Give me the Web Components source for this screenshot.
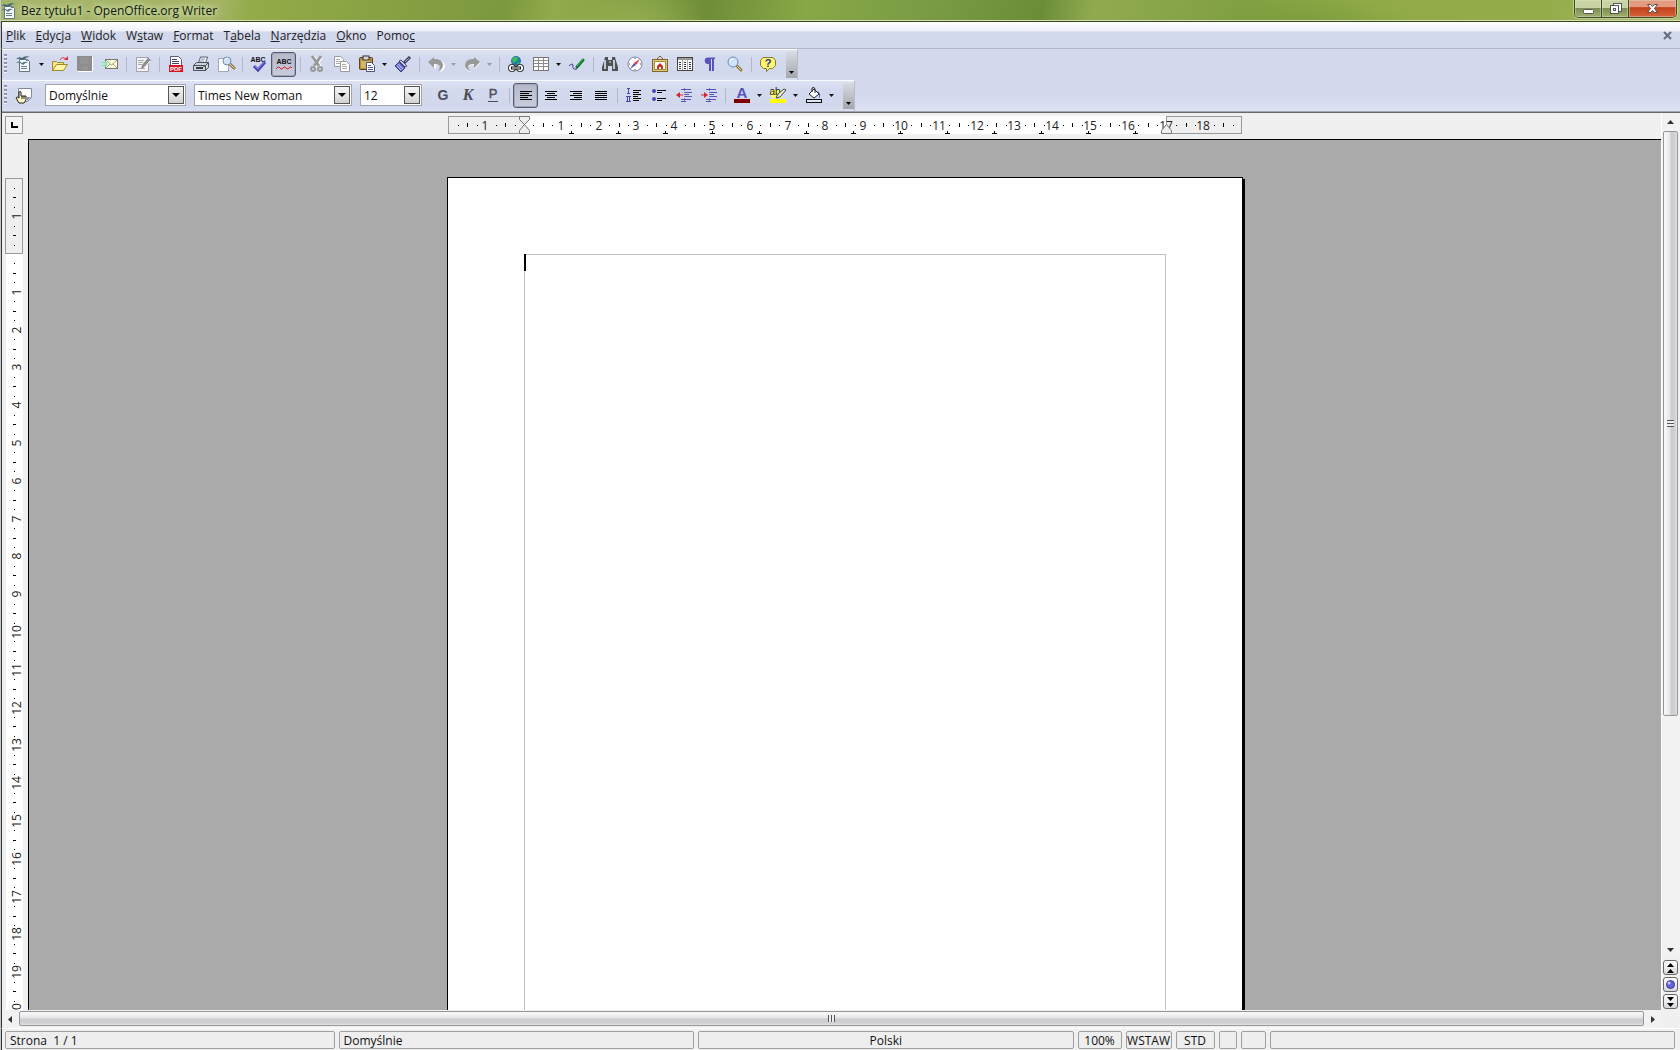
<!DOCTYPE html>
<html lang="pl">
<head>
<meta charset="utf-8">
<title>Bez tytułu1 - OpenOffice.org Writer</title>
<style>
    html, body {
        margin: 0;
        height: 100%;
        overflow: hidden;
    }

    body {
        font-family: "Open Sans", "Noto Sans", sans-serif;
        font-size: 11px;
        color: #111;
    }
</style>
</head>
<body>

<writer-window>
    <title-bar slot="title">Bez tytułu1 - OpenOffice.org Writer</title-bar>

    <menu-bar slot="menu">
        <menu-entry><u>P</u>lik</menu-entry>
        <menu-entry><u>E</u>dycja</menu-entry>
        <menu-entry><u>W</u>idok</menu-entry>
        <menu-entry>W<u>s</u>taw</menu-entry>
        <menu-entry><u>F</u>ormat</menu-entry>
        <menu-entry>T<u>a</u>bela</menu-entry>
        <menu-entry><u>N</u>arzędzia</menu-entry>
        <menu-entry><u>O</u>kno</menu-entry>
        <menu-entry>Pomo<u>c</u></menu-entry>
    </menu-bar>

    <tool-bar slot="tools" label="Standardowy">
        <tool-button icon="new" label="Nowy" drop></tool-button>
        <tool-button icon="open" label="Otwórz"></tool-button>
        <tool-button icon="save" label="Zapisz"></tool-button>
        <tool-button icon="mail" label="Wyślij"></tool-button>
        <tool-separator></tool-separator>
        <tool-button icon="edit" label="Edytuj plik"></tool-button>
        <tool-separator></tool-separator>
        <tool-button icon="pdf" label="Eksportuj jako PDF"></tool-button>
        <tool-button icon="print" label="Drukuj"></tool-button>
        <tool-button icon="preview" label="Podgląd strony"></tool-button>
        <tool-separator></tool-separator>
        <tool-button icon="spell" label="Sprawdzanie pisowni"></tool-button>
        <tool-button icon="autospell" label="Autosprawdzanie pisowni" pressed></tool-button>
        <tool-separator></tool-separator>
        <tool-button icon="cut" label="Wytnij"></tool-button>
        <tool-button icon="copy" label="Kopiuj"></tool-button>
        <tool-button icon="paste" label="Wklej" drop></tool-button>
        <tool-button icon="brush" label="Malarz formatów"></tool-button>
        <tool-separator></tool-separator>
        <tool-button icon="undo" label="Cofnij" drop="off"></tool-button>
        <tool-button icon="redo" label="Ponów" drop="off"></tool-button>
        <tool-separator></tool-separator>
        <tool-button icon="link" label="Hiperłącze"></tool-button>
        <tool-button icon="table" label="Tabela" drop></tool-button>
        <tool-button icon="draw" label="Rysowanie"></tool-button>
        <tool-separator></tool-separator>
        <tool-button icon="find" label="Znajdź"></tool-button>
        <tool-button icon="compass" label="Nawigator"></tool-button>
        <tool-button icon="gallery" label="Galeria"></tool-button>
        <tool-button icon="sources" label="Źródła danych"></tool-button>
        <tool-button icon="pilcrow" label="Znaki niedrukowane"></tool-button>
        <tool-button icon="zoom" label="Powiększenie"></tool-button>
        <tool-separator></tool-separator>
        <tool-button icon="help" label="Pomoc"></tool-button>
    </tool-bar>

    <tool-bar slot="tools" label="Formatowanie">
        <tool-button icon="styles" label="Style i formatowanie"></tool-button>
        <combo-box class="style" label="Styl" value="Domyślnie"></combo-box>
        <combo-box class="font" label="Nazwa czcionki" value="Times New Roman"></combo-box>
        <combo-box class="size" label="Rozmiar" value="12"></combo-box>
        <tool-button icon="bold" label="Pogrubienie"></tool-button>
        <tool-button icon="italic" label="Kursywa"></tool-button>
        <tool-button icon="underline" label="Podkreślenie"></tool-button>
        <tool-separator></tool-separator>
        <tool-button icon="left" label="Do lewej" pressed></tool-button>
        <tool-button icon="center" label="Wyśrodkowanie"></tool-button>
        <tool-button icon="right" label="Do prawej"></tool-button>
        <tool-button icon="justify" label="Wyjustowanie"></tool-button>
        <tool-separator></tool-separator>
        <tool-button icon="numbers" label="Numerowanie"></tool-button>
        <tool-button icon="bullets" label="Wypunktowanie"></tool-button>
        <tool-button icon="outdent" label="Zmniejsz wcięcie"></tool-button>
        <tool-button icon="indent" label="Zwiększ wcięcie"></tool-button>
        <tool-separator></tool-separator>
        <tool-button icon="color" label="Kolor czcionki" drop></tool-button>
        <tool-button icon="highlight" label="Podświetlenie" drop></tool-button>
        <tool-button icon="fill" label="Kolor tła" drop></tool-button>
    </tool-bar>

    <doc-area slot="document"></doc-area>

    <status-bar slot="status">
        <span>Strona &nbsp;1 / 1</span>
        <span>Domyślnie</span>
        <span class="mid">Polski</span>
        <span class="mid">100%</span>
        <span class="mid">WSTAW</span>
        <span class="mid">STD</span>
        <span></span>
        <span></span>
        <span></span>
    </status-bar>
</writer-window>

<script>
// 16x16 drawings for the toolbars
const page = (x, y, w, h, stroke = '#777') =>
    `<path d="M${x} ${y}h${w - 3}l3 3v${h - 3}h-${w}z" fill="#fff" stroke="${stroke}"/>`;

const lines = (rows) => rows
    .map(([x, y, w, c]) => `<rect x="${x}" y="${y}" width="${w}" height="1" fill="${c || '#000'}"/>`)
    .join('');

const lens = (x, y, r) =>
    `<path d="M${x + r - 1} ${y + r - 1}l4 4" stroke="#8d7240" stroke-width="3" stroke-linecap="round"/>
     <path d="M${x + r - 1} ${y + r - 1}l4 4" stroke="#f2d49a" stroke-linecap="round"/>
     <circle cx="${x}" cy="${y}" r="${r}" fill="#cfe3fb" stroke="#7389b0"/>
     <path d="M${x - r + 2} ${y - 1}q1 -2 3 -2" stroke="#fff" fill="none"/>`;

const icons = {
    new: `<path d="M3.500 3.500h8l2 2v10h-10z" fill="#f4f8fa" stroke="#68777f"/>
        <path d="M0 3q3 -3 6 -1q3 -3 8 -1q-4 0 -5 2l-4 1q-2 -2 -5 -1z" fill="#466776"/>
        <path d="M0 7q3 -3 6 0q2 -2 6 -1q-3 1 -5 3q-3 -3 -7 -2z" fill="#58798a"/>
        ${lines([[5, 10, 6, '#64818e'], [5, 12, 6, '#64818e'], [10, 4, 2, '#64818e']])}`,
    open: `<path d="M0.500 14.500v-9h4l1 1h6v3" fill="#f5e68c" stroke="#a08a26"/>
        <path d="M0.500 14.500l4 -6h11l-4 6z" fill="#fff6a8" stroke="#a08a26"/>
        <path d="M8 4q2 -4 6 -1" fill="none" stroke="#d8323c"/><path d="M12 4h4v-4z" fill="#d8323c"/>`,
    save: `<rect x="1" y="1" width="15" height="15" fill="#fff"/><path d="M0 0h15v15h-14l-1 -1z" fill="#8d8d8d"/>
        <path d="M3 1h9v7h-9zM4 10h7v4h-7z" fill="#949494"/>`,
    mail: `<rect x="3.500" y="3.500" width="12" height="9" fill="#fffde0" stroke="#777a66"/>
        <path d="M4 4l5.500 5l5.500 -5M4 12l4 -4M15 12l-4 -4" fill="none" stroke="#999a80"/>
        <path d="M0 6h3v-2l3 4l-3 4v-2h-3z" fill="#6fe09a" opacity=".8"/><path d="M0 8h4" stroke="#e8fff0"/>`,
    edit: `<path d="M1.500 1.500h12v14h-12z" fill="#f3f3f6" stroke="#a2a2a8"/>
        ${lines([[3, 4, 6, '#aaa'], [3, 6, 5, '#aaa'], [3, 8, 4, '#aaa'], [3, 12, 7, '#aaa']])}
        <path d="M6 13l1 -4l6 -7l3 2l-6 7z" fill="#8c8c8c"/><path d="M15 5l-6 7" stroke="#fff"/>`,
    pdf: `${page(2.5, 0.5, 11, 14, '#5a5d78')}
        ${lines([[4, 3, 5, '#42446a'], [4, 5, 7, '#42446a'], [4, 7, 7, '#42446a']])}
        <rect x="1" y="9" width="14" height="7" fill="#d81424"/>
        <text x="8" y="15" font-size="6" font-weight="700" fill="#fff" text-anchor="middle">PDF</text>`,
    print: `<path d="M5.500 7l2 -6h7l-2 6z" fill="#fff" stroke="#555e77"/><path d="M8 3h4M7 5h4" stroke="#7b91ba"/>
        <path d="M0.500 9.500l3 -3h12v5l-3 3h-12z" fill="#cfd2dc" stroke="#4c505c"/>
        <path d="M1 9.500h11.500l3 -3M12.500 9.500v5" stroke="#4c505c" fill="none"/>
        <path d="M3 12h7" stroke="#343844" stroke-width="2"/><rect x="10" y="10" width="2" height="1" fill="#35a852"/>`,
    preview: `${page(0.5, 2.5, 10, 13, '#a1a8bd')}${lens(9, 5, 4)}`,
    spell: `<text x="7" y="6" font-size="7" font-weight="700" fill="#111" text-anchor="middle">ABC</text>
        <path d="M3 10l4 4l7 -8" fill="none" stroke="#4944b8" stroke-width="3"/><path d="M4 10l3 3l6 -7" fill="none" stroke="#8d8bf0"/>`,
    autospell: `<text x="8" y="8" font-size="7" font-weight="700" fill="#111" text-anchor="middle">ABC</text>
        <path d="M0 13l2 -2h1l2 2h1l2 -2h1l2 2h1l2 -2h1l1 1" fill="none" stroke="#dc1f30"/>`,
    cut: `<path d="M4 1l7 10M12 1l-7 10" stroke="#fff" stroke-width="4"/>
        <path d="M3 0l7 10M12 0l-7 10" stroke="#999" stroke-width="3"/>
        <circle cx="4" cy="13" r="2" fill="none" stroke="#999" stroke-width="2"/>
        <circle cx="11" cy="13" r="2" fill="none" stroke="#999" stroke-width="2"/>`,
    copy: `${page(0.5, 0.5, 9, 10, '#9b9b9f')}${lines([[2, 3, 4, '#aaa'], [2, 5, 5, '#aaa'], [2, 7, 5, '#aaa']])}
        ${page(6.5, 5.5, 9, 10, '#9b9b9f')}${lines([[8, 8, 4, '#aaa'], [8, 10, 5, '#aaa'], [8, 12, 5, '#aaa']])}`,
    paste: `<rect x="0.500" y="1.500" width="13" height="12" rx="1" fill="#b68b35" stroke="#594317"/>
        <rect x="2" y="4" width="9" height="8" fill="#d5b566"/>
        <rect x="4" y="0" width="6" height="4" fill="#d6d6d6" stroke="#333"/>
        ${page(7.5, 6.5, 8, 9, '#4c5777')}${lines([[9, 9, 3, '#5366a0'], [9, 11, 5, '#5366a0'], [9, 13, 5, '#5366a0']])}`,
    brush: `<path d="M9 7l6 -6" stroke="#38385c" stroke-width="3"/><path d="M10 6l4 -4" stroke="#b0b0da"/>
        <path d="M6 4l6 6l-2 1l-6 -6z" fill="#cfcfe8" stroke="#494978"/>
        <path d="M4 6l6 6l-4 4l-6 -6z" fill="#6d75cc" stroke="#353b84"/><path d="M3 8l5 5M2 10l4 4" stroke="#bdc3ff"/>`,
    undo: `<path d="M7 3q8 -1 9 6q0 4 -5 6q3 -4 1 -6q-2 -1 -5 -1v4l-6 -5l6 -6z" fill="#fff" transform="translate(1 1)"/>
        <path d="M6 3q8 -1 9 6q0 4 -5 6q3 -4 1 -6q-2 -1 -5 -1v4l-6 -6l6 -5z" fill="#999"/>`,
    redo: `<g transform="translate(16 0) scale(-1 1)"><path d="M6 4q8 -1 9 6q0 4 -5 6q3 -4 1 -6q-2 -1 -5 -1v4l-6 -6l6 -5z" fill="#fff"/>
        <path d="M6 3q8 -1 9 6q0 4 -5 6q3 -4 1 -6q-2 -1 -5 -1v4l-6 -6l6 -5z" fill="#999"/></g>`,
    link: `<circle cx="8" cy="5" r="5" fill="#2776a8"/><path d="M4 3q3 -4 6 -1l-1 3l-4 2zM9 6l3 1l-2 2z" fill="#35bd57"/>
        <g fill="#fff" stroke="#111"><rect x="0.500" y="8.500" width="7" height="7" rx="3"/>
        <rect x="8.500" y="8.500" width="7" height="7" rx="3"/></g>
        <path d="M3 12h10" stroke="#111" stroke-width="3"/><path d="M4 12h8" stroke="#fff"/>`,
    table: `<rect x="0.500" y="1.500" width="15" height="13" fill="#fff" stroke="#777"/>
        <path d="M1 4.500h14M1 7.500h14M1 10.500h14M5.500 2v12M10.500 2v12" stroke="#8b8b8b"/>`,
    draw: `<path d="M0 10q4 -4 4 0q-1 4 4 3" fill="none" stroke="#35359a"/>
        <path d="M8 11l6 -7" stroke="#147333" stroke-width="3" stroke-linecap="round"/>
        <path d="M8 10l6 -7" stroke="#38cf66"/>`,
    find: `<path d="M3 1h3v3h4v-3h3l1 4l2 6v4h-6v-5h-4v5h-6v-4l2 -6z" fill="#4d5054"/>
        <path d="M3 4v9M12 4v9" stroke="#c3c8cc" stroke-width="2"/><path d="M7 6h2" stroke="#ddd"/>`,
    compass: `<circle cx="8" cy="8" r="7" fill="#fff" stroke="#7d83a1"/>
        <path d="M13 3l-4 6l-2 -2z" fill="#e4313b"/><path d="M3 13l4 -6l2 2z" fill="#4e5ca8"/>
        <path d="M8 2v1M8 13v1M2 8h1M13 8h1" stroke="#555"/>`,
    gallery: `<path d="M5 3l3 -3l3 3" fill="none" stroke="#776033"/>
        <rect x="0.500" y="3.500" width="15" height="12" fill="#e0c878" stroke="#7d672c"/>
        <rect x="2.500" y="5.500" width="11" height="8" fill="#fff" stroke="#a98c38"/>
        <path d="M5 10l3 -3l3 3v3h-2v-2h-2v2h-2z" fill="#c93026"/>`,
    sources: `<rect x="0.500" y="1.500" width="15" height="13" fill="#fff" stroke="#444"/><path d="M1 3h14" stroke="#999" stroke-width="2"/>
        <path d="M5.500 4v10M10.500 4v10" stroke="#aaa"/>
        ${[6, 8, 10, 12].map(y => lines([[2, y, 2, '#333'], [7, y, 2, '#333'], [12, y, 2, '#333']])).join('')}`,
    pilcrow: `<path d="M13 1.500h-7a3 3 0 0 0 0 6.500h1v7h2v-12h1v12h2v-12h1z" fill="#5853bb"/>`,
    zoom: lens(6, 6, 5),
    help: `<path d="M3 1.500h10l2.500 3v5l-3 3h-3l-3 3v-3h-3l-3 -3v-5z" fill="#fff56a" stroke="#817b38"/>
        <text x="8" y="11" font-size="11" font-weight="700" fill="#33318c" text-anchor="middle">?</text>`,
    styles: `<path d="M2.500 1.500h13v9l-4 4h-9z" fill="#fff" stroke="#8287a0"/><path d="M15 10h-4v4z" fill="#8b94bc"/>
        <path d="M3 16l-3 -5q1 -2 3 0v-6q1 -1 2 0v4h5v4l-2 3z" fill="#fff7c0" stroke="#222"/><path d="M6 9v3M8 9v3" stroke="#222"/>`,
    bold: `<text x="8" y="13" font-size="14" font-weight="800" fill="#4a4d57" text-anchor="middle">G</text>`,
    italic: `<text x="8" y="13" font-size="16" font-weight="700" font-style="italic" font-family="Liberation Serif" fill="#4a4d57" text-anchor="middle">K</text>`,
    underline: `<text x="8" y="11" font-size="13" fill="#4a4d57" stroke="#4a4d57" stroke-width=".4" text-anchor="middle">P</text>${lines([[3, 14, 10, '#4a4d57']])}`,
    left: lines([[2, 4, 12], [2, 6, 9], [2, 8, 12], [2, 10, 8], [2, 12, 12]]),
    center: lines([[2, 4, 12], [4, 6, 8], [2, 8, 12], [4, 10, 8], [2, 12, 12]]),
    right: lines([[2, 4, 12], [5, 6, 9], [2, 8, 12], [6, 10, 8], [2, 12, 12]]),
    justify: lines([[2, 4, 12], [2, 6, 12], [2, 8, 12], [2, 10, 12], [2, 12, 12]]),
    numbers: `<path d="M1 1.500h3M2.500 2v4M1 6.500h3M0 9.500h5M1.500 9v5M3.500 9v5M0 14.500h5" stroke="#4b47b0"/>
        ${lines([[7, 3, 8], [7, 5, 6], [7, 7, 8], [7, 9, 5], [7, 11, 8], [7, 13, 6]])}`,
    bullets: `<circle cx="3" cy="4" r="2" fill="#4b47b0"/><circle cx="3" cy="12" r="2" fill="#4b47b0"/>
        ${lines([[6, 3, 9], [6, 5, 5], [6, 11, 9], [6, 13, 5]])}`,
    outdent: `${lines([[5, 2, 10, '#5853bb'], [8, 5, 8, '#5853bb'], [8, 7, 5, '#5853bb'], [8, 9, 8, '#5853bb'], [5, 12, 10, '#5853bb'], [5, 14, 5, '#5853bb']])}
        <path d="M2 8h5" stroke="#dc2230"/><path d="M0 8l4 -3v6z" fill="#dc2230"/><path d="M8.500 1v14" stroke="#7c7ab0" stroke-dasharray="1 1"/>`,
    indent: `${lines([[5, 2, 10, '#5853bb'], [8, 5, 8, '#5853bb'], [8, 7, 5, '#5853bb'], [8, 9, 8, '#5853bb'], [5, 12, 10, '#5853bb'], [5, 14, 5, '#5853bb']])}
        <path d="M0 8h4" stroke="#dc2230"/><path d="M7 8l-4 -3v6z" fill="#dc2230"/><path d="M8.500 1v14" stroke="#7c7ab0" stroke-dasharray="1 1"/>`,
    color: `<text x="8" y="11" font-size="15" font-weight="700" fill="#5853bb" text-anchor="middle">A</text>
        <rect x="0" y="12" width="16" height="4" fill="#800000"/>`,
    highlight: `<rect x="1" y="3" width="11" height="8" rx="3" fill="#ffff5c"/><rect x="0" y="12" width="16" height="4" fill="#ff0"/>
        <text x="5" y="8" font-size="10" fill="#222" text-anchor="middle">ab</text>
        <path d="M6 11l2 -4l6 -5l2 1l-6 7z" fill="#eee9d2" stroke="#444"/>`,
    fill: `<path d="M3 7l5 -5l5 5l-5 4z" fill="#fff" stroke="#222"/><path d="M6 5v-4q2 -2 3 1v4" fill="none" stroke="#222"/>
        <path d="M11 4q4 1 3 7q-1 0 -1 -4z" fill="#5853bb"/><rect x="0.500" y="12.500" width="15" height="3" fill="#dfe4f6" stroke="#111"/>`
};

class BaseElement extends HTMLElement {
    render(html) {
        const template = document.createElement('template');
        template.innerHTML = html;
        this.attachShadow({ mode: 'open' }).appendChild(template.content.cloneNode(true));
    }
}

class WriterWindow extends BaseElement {
    constructor() {
        super();
        this.render(`
            <style>
                :host {
                    display: grid;
                    grid-template-rows: 22px 27px auto 1fr auto;
                    grid-template-columns: minmax(0, 1fr);
                    box-sizing: border-box;
                    height: 100vh;
                    background: #f0f0f0;
                    border-left: 1px solid #c4c8cc;
                }
                .tools {
                    background: linear-gradient(#d3d8ec 70%, #dde3f5);
                    border-bottom: 1px solid #666870;
                    box-shadow: inset 0 -1px #a3a5b0;
                    padding-bottom: 1px;
                    border-left: 1px solid #333;
                }
            </style>
            <slot name="title"></slot>
            <slot name="menu"></slot>
            <div class="tools"><slot name="tools"></slot></div>
            <slot name="document"></slot>
            <slot name="status"></slot>
        `);
    }
}

class TitleBar extends BaseElement {
    constructor() {
        super();
        this.render(`
            <style>
                :host {
                    display: flex;
                    justify-content: space-between;
                    box-sizing: border-box;
                    background:
                        radial-gradient(ellipse 70px 30px at 38% 100%, #a4b95d77, transparent),
                        radial-gradient(ellipse 110px 22px at 78% 100%, #7595387a, transparent),
                        linear-gradient(100deg, #a5b56a 0, #a3b465 13%, #93ab48 15%, #8ca545 20%, #7c983f 30%, #92ab4c 33%,
                            #809d42 39%, #6f8d37 42%, #88a747 48%, #789a43 56%, #6c8d38 62%, #91aa50 65%, #80a042 74%, #91ab47 82%, #94ac4a 92%, #adbd70);
                    border-bottom: 1px solid #35461d;
                    box-shadow: inset 0 -1px #d5dfb2;
                }
                .name {
                    display: flex;
                    align-items: center;
                    gap: 4px;
                    height: 21px;
                    font-size: 12px;
                    color: #10180a;
                    text-shadow: 0 0 8px #e5efc8, 0 0 6px #e5efc8;
                }
                .keys {
                    display: flex;
                    height: 18px;
                    margin-right: 3px;
                    box-sizing: border-box;
                    border: 1px solid #3f4a2a;
                    border-top: 0;
                    border-radius: 0 0 5px 5px;
                    overflow: hidden;
                    box-shadow: 0 0 0 1px #dce5bd88;
                }
                button {
                    width: 27px;
                    padding: 0;
                    border: 0;
                    border-right: 1px solid #3f4a2a;
                    background: linear-gradient(#c8d3a4 45%, #7d8d54 50%, #a0b16e);
                    box-shadow: inset 0 0 0 1px #dfe7c566;
                }
                button.close {
                    width: 47px;
                    border: 0;
                    background: linear-gradient(#e39a80 40%, #c3401c 45%, #d5633a);
                }
                button svg { display: block; margin: auto; }
            </style>
            <div class="name">
                <svg width="16" height="16" viewBox="0 0 16 16">${icons.new}</svg>
                <slot></slot>
            </div>
            <div class="keys">
                <button aria-label="Minimalizuj"><svg width="13" height="13"><rect x="1.500" y="7.500" width="10" height="4" rx="1" fill="#fff" stroke="#555"/></svg></button>
                <button aria-label="Przywróć"><svg width="13" height="13" fill="#fff" stroke="#555"><rect x="4.500" y="1.500" width="8" height="8"/><rect x="1.500" y="3.500" width="8" height="8"/><rect x="4.500" y="6.500" width="2" height="2"/></svg></button>
                <button class="close" aria-label="Zamknij"><svg width="13" height="13"><path d="M1.500 2.500h3l2 2l2 -2h3l-3 4l3 4h-3l-2 -2l-2 2h-3l3 -4z" fill="#fff" stroke="#5c4a4a"/></svg></button>
            </div>
        `);
    }
}

class MenuBar extends BaseElement {
    constructor() {
        super();
        this.render(`
            <style>
                :host {
                    display: flex;
                    align-items: stretch;
                    box-sizing: border-box;
                    background: linear-gradient(#fff, #eef1fa 9px, #d3d9ec 10px);
                    border-bottom: 1px solid #b4b8c4;
                    border-left: 1px solid #333;
                }
                .close {
                    margin: 2px 6px 0 auto;
                    padding: 0;
                    border: 0;
                    background: none;
                    line-height: 0;
                }
            </style>
            <slot></slot>
            <button class="close" aria-label="Zamknij dokument">
                <svg width="12" height="12"><path d="M2 2l7 7M9 2l-7 7" stroke="#666c80" stroke-width="2"/></svg>
            </button>
        `);
    }

    connectedCallback() {
        this.setAttribute('role', 'menubar');
    }
}

class MenuEntry extends BaseElement {
    constructor() {
        super();
        this.render(`
            <style>
                :host { display: flex; }
                button {
                    border: 0;
                    padding: 0 6px 0 4px;
                    background: none;
                    font: inherit;
                    font-size: 12px;
                    color: #222;
                }
            </style>
            <button><slot></slot></button>
        `);
    }
}

class ToolBar extends BaseElement {
    connectedCallback() {
        this.render(`
            <style>
                :host {
                    display: flex;
                    align-items: center;
                    box-sizing: border-box;
                    width: max-content;
                    height: 31px;
                    padding-bottom: 2px;
                    border-top: 1px solid #fafbff;
                    border-right: 1px solid #b9bdcb;
                    background: linear-gradient(#dde2f3, #d3d9ee 30%, #d2d8ec 80%, #d9dff2);
                }
                .grip {
                    width: 3px;
                    height: 20px;
                    margin: 0 4px 0 2px;
                    background: repeating-linear-gradient(#9297a8 0 2px, #f4f6fc 2px 3px, transparent 3px 4px);
                }
                .more {
                    display: flex;
                    align-items: flex-end;
                    justify-content: center;
                    width: 11px;
                    height: 26px;
                    margin: 2px 0 0 6px;
                    padding: 0 0 4px;
                    border: 0;
                    box-sizing: border-box;
                    background: linear-gradient(#d8dae2, #a5a7ad);
                }
            </style>
            <span class="grip"></span>
            <slot></slot>
            <button class="more" aria-label="Opcje paska: ${this.getAttribute('label')}">
                <svg width="5" height="3"><path d="M0 0h5l-2.500 3z"/></svg>
            </button>
        `);
        this.setAttribute('role', 'toolbar');
    }
}

class ToolButton extends BaseElement {
    connectedCallback() {
        const label = this.getAttribute('label');
        const off = this.getAttribute('drop') === 'off';
        const drop = this.hasAttribute('drop')
            ? `<button class="drop" aria-label="${label}: opcje"><svg width="5" height="3"><path d="M0 0h5l-2.500 3z" fill="${off ? '#999ba5' : '#111'}"/></svg></button>`
            : '';
        this.render(`
            <style>
                :host { display: flex; align-items: center; }
                button {
                    display: flex;
                    align-items: center;
                    justify-content: center;
                    box-sizing: border-box;
                    width: 25px;
                    height: 25px;
                    padding: 0;
                    border: 1px solid transparent;
                    border-radius: 3px;
                    background: none;
                }
                .drop { width: 11px; }
                :host([pressed]) button {
                    border-color: #565b6b;
                    background: linear-gradient(#b4b8c8, #c8ccdc);
                    box-shadow: inset 0 0 0 1px #a3a8ba;
                }
                svg { overflow: visible; }
            </style>
            <button aria-label="${label}"><svg width="16" height="16" viewBox="0 0 16 16" fill-rule="evenodd">${icons[this.getAttribute('icon')]}</svg></button>${drop}
        `);
    }
}

class ToolSeparator extends BaseElement {
    constructor() {
        super();
        this.render(`
            <style>
                :host {
                    width: 1px;
                    height: 15px;
                    margin: 0 3px 0 4px;
                    background: #b3b7c7;
                }
            </style>
        `);
    }
}

class ComboBox extends BaseElement {
    connectedCallback() {
        this.render(`
            <style>
                :host {
                    display: grid;
                    grid-template-columns: 1fr 18px;
                    box-sizing: border-box;
                    height: 22px;
                    border: 1px solid #a2a5ac;
                    background: #fff;
                    margin-right: 8px;
                }
                :host(.style) { width: 141px; margin-left: 9px; }
                :host(.font) { width: 158px; }
                :host(.size) { width: 62px; }
                select {
                    grid-area: 1 / 1 / 2 / 3;
                    appearance: none;
                    border: 0;
                    padding: 0 3px;
                    background: none;
                    font: inherit;
                    font-size: 12px;
                    color: #111;
                }
                .arrow {
                    grid-area: 1 / 2;
                    display: grid;
                    place-items: center;
                    margin: 1px;
                    border: 1px solid #555;
                    background: linear-gradient(#f6f6f6, #d2d2d2);
                    pointer-events: none;
                }
            </style>
            <select aria-label="${this.getAttribute('label')}"><option>${this.getAttribute('value')}</option></select>
            <span class="arrow"><svg width="8" height="4"><path d="M0 0h8l-4 4z"/></svg></span>
        `);
    }
}

// One centimetre of the document on screen
const CM = 37.8;

class RulerScale extends BaseElement {
    connectedCallback() {
        const vertical = this.hasAttribute('vertical');
        this.render(`
            <style>
                :host { display: block; }
                svg { display: block; margin: 0 auto; overflow: hidden; }
                :host([vertical]) svg { margin: 0; }
                text { font-size: 12px; text-anchor: middle; fill: #222; }
            </style>
            ${vertical ? this.vertical() : this.horizontal()}
        `);
    }

    marks(from, to, draw) {
        let out = '';
        for (let q = from; q <= to; q++) {
            if (q !== 0) out += draw(Math.round(q * CM / 4), q);
        }
        return out;
    }

    horizontal() {
        const zero = 77, end = 719;
        const marks = this.marks(-7, 75, (at, q) => {
            const x = zero + at;
            if (q % 4 === 0) return `<text x="${x - 1}" y="14">${Math.abs(q / 4)}</text>`;
            return q % 2 === 0
                ? `<rect x="${x}" y="7" width="1" height="4"/>`
                : `<rect x="${x}" y="9" width="1" height="1"/>`;
        });
        let tabs = '';
        for (let x = 47; x < end - zero; x += 47) {
            tabs += `<path d="M${zero + x - 2} 17.500h5M${zero + x + 0.5} 15v3" stroke="#000"/>`;
        }
        return `<svg width="796" height="19">
            <rect x="${zero}" y="0" width="${end - zero}" height="18" fill="#fff"/>
            <rect x="1.500" y="0.500" width="${zero - 1}" height="17" fill="#efefef" stroke="#999"/>
            <rect x="${end + 0.5}" y="0.500" width="75" height="17" fill="#efefef" stroke="#999"/>
            ${marks}${tabs}
            <path d="M72.500 0.500h10v3l-5 5l-5 -5zM72.500 17.500h10v-3l-5 -6l-5 6z" fill="#eee" stroke="#777"/>
            <path d="M714.500 17.500h10v-3l-5 -6l-5 6z" fill="#eee" stroke="#777"/>
        </svg>`;
    }

    vertical() {
        const zero = 115;
        const marks = this.marks(-7, 81, (at, q) => {
            const y = zero + at;
            if (q % 4 === 0) return `<text transform="translate(16 ${y}) rotate(-90)">${Math.abs(q / 4)}</text>`;
            return q % 2 === 0
                ? `<rect x="8" y="${y}" width="3" height="1"/>`
                : `<rect x="9" y="${y}" width="1" height="1"/>`;
        });
        return `<svg width="19" height="871">
            <rect x="1" y="${zero}" width="17" height="756" fill="#fff"/>
            <rect x="0.500" y="39.500" width="17" height="75" fill="#efefef" stroke="#999"/>
            ${marks}
        </svg>`;
    }
}

class ScrollStrip extends BaseElement {
    connectedCallback() {
        const across = this.hasAttribute('across');
        const arrow = (d) => `<svg width="7" height="7"><path d="${d}" fill="#333"/></svg>`;
        this.render(`
            <style>
                :host {
                    display: flex;
                    flex-direction: ${across ? 'row' : 'column'};
                    flex: 1;
                    min-width: 0;
                    min-height: 0;
                    background: #f2f2f3;
                }
                button {
                    display: grid;
                    place-items: center;
                    flex: none;
                    width: 17px;
                    height: 17px;
                    padding: 0;
                    border: 0;
                    background: none;
                }
                .thumb {
                    display: grid;
                    place-items: center;
                    box-sizing: border-box;
                    flex: ${across ? '1' : '587'};
                    ${across ? 'height: 15px' : 'width: 15px; margin-left: 1px'};
                    border: 1px solid #96969b;
                    border-radius: 2px;
                    background: linear-gradient(${across ? '180deg' : '90deg'}, #f6f6f7 10%, #e5e5e7 45%, #cbcbd0 55%, #d0d0d5 85%, #e5e5e8);
                }
                .rest { flex: ${across ? '0' : '227'}; }
                .grip {
                    width: 7px;
                    height: 7px;
                    background: repeating-linear-gradient(${across ? '90deg' : '180deg'}, #555 0 1px, #eee 1px 3px);
                }
            </style>
            <button aria-label="Wstecz">${arrow(across ? 'M5 0v7l-4 -3.500z' : 'M0 5h7l-3.500 -4z')}</button>
            <div class="thumb"><span class="grip"></span></div>
            <div class="rest"></div>
            <button aria-label="Dalej">${arrow(across ? 'M2 0v7l4 -3.500z' : 'M0 2h7l-3.500 4z')}</button>
        `);
    }
}

class DocPage extends BaseElement {
    constructor() {
        super();
        this.render(`
            <style>
                :host {
                    display: block;
                    box-sizing: border-box;
                    width: 796px;
                    height: 1124px;
                    margin: 37px auto 0;
                    padding: 76px;
                    background: #fff;
                    border: 1px solid #000;
                    box-shadow: 2px 2px #000;
                }
                .text {
                    box-sizing: border-box;
                    height: 100%;
                    border: 1px solid #c0c0c0;
                }
                .caret {
                    width: 2px;
                    height: 17px;
                    margin: -1px;
                    background: #000;
                }
            </style>
            <div class="text"><div class="caret"></div></div>
        `);
    }
}

class DocArea extends BaseElement {
    constructor() {
        super();
        this.render(`
            <style>
                :host {
                    display: grid;
                    grid-template-columns: 26px minmax(0, 1fr) 19px;
                    grid-template-rows: 26px minmax(0, 1fr) 18px;
                    min-height: 0;
                    border-left: 1px solid #333;
                    background: #f0f0f0;
                }
                .corner {
                    width: 18px;
                    height: 18px;
                    margin: 3px;
                    padding: 0;
                    border: 1px solid #999;
                    background: #f4f4f4;
                }
                .corner svg { display: block; margin: auto; }
                .across { padding: 3px 0 0 1px; }
                .down { padding-left: 3px; overflow: hidden; }
                .canvas {
                    overflow: hidden;
                    background: #aaa;
                    border: solid #000;
                    border-width: 1px 0 0 1px;
                }
                .side {
                    grid-area: 1 / 3 / 3 / 4;
                    display: flex;
                    flex-direction: column;
                    padding-top: 1px;
                    border-left: 1px solid #fff;
                }
                .side button {
                    display: grid;
                    place-items: center;
                    width: 15px;
                    height: 15px;
                    margin: 2px 0 0 1px;
                    padding: 0;
                    box-sizing: border-box;
                    border: 1px solid #666;
                    border-radius: 3px;
                    background: linear-gradient(#fff, #d8d8dc);
                }
                .side button:last-child { margin-bottom: 1px; }
                .bottom { grid-area: 3 / 1 / 4 / 3; display: flex; padding-top: 1px; }
            </style>
            <button class="corner" aria-label="Tabulator"><svg width="8" height="8"><path d="M2 1v5h6" fill="none" stroke="#000" stroke-width="2"/></svg></button>
            <ruler-scale class="across"></ruler-scale>
            <ruler-scale class="down" vertical></ruler-scale>
            <div class="canvas"><doc-page></doc-page></div>
            <div class="side">
                <scroll-strip></scroll-strip>
                <button aria-label="Poprzednia strona"><svg width="7" height="10"><path d="M0 4h7l-3.500 -4zM0 10h7l-3.500 -4z"/></svg></button>
                <button aria-label="Nawigacja"><svg width="9" height="9"><circle cx="4.500" cy="4.500" r="4" fill="#6464da" stroke="#38388f"/><circle cx="3" cy="3" r="1.500" fill="#c9c9ff"/></svg></button>
                <button aria-label="Następna strona"><svg width="7" height="10"><path d="M0 0h7l-3.500 4zM0 6h7l-3.500 4z"/></svg></button>
            </div>
            <div class="bottom"><scroll-strip across></scroll-strip></div>
        `);
    }
}

class StatusBar extends BaseElement {
    constructor() {
        super();
        this.render(`
            <style>
                :host {
                    display: grid;
                    grid-template-columns: 330fr 356fr 376fr 44px 46px 39px 18px 25px 406fr;
                    gap: 4px;
                    padding: 2px 5px 1px 3px;
                    border-top: 1px solid #fff;
                    border-left: 1px solid #333;
                    background: #f0f0f0;
                }
                ::slotted(span) {
                    box-sizing: border-box;
                    min-width: 0;
                    height: 18px;
                    padding: 0 4px;
                    border: 1px solid #a0a0a0;
                    border-radius: 2px;
                    background: #eee;
                    font-size: 12px;
                    line-height: 17px;
                    white-space: nowrap;
                }
                ::slotted(.mid) {
                    display: flex;
                    justify-content: center;
                    padding: 0;
                }
            </style>
            <slot></slot>
        `);
    }
}

window.customElements.define('writer-window', WriterWindow);
window.customElements.define('title-bar', TitleBar);
window.customElements.define('menu-bar', MenuBar);
window.customElements.define('menu-entry', MenuEntry);
window.customElements.define('tool-bar', ToolBar);
window.customElements.define('tool-button', ToolButton);
window.customElements.define('tool-separator', ToolSeparator);
window.customElements.define('combo-box', ComboBox);
window.customElements.define('ruler-scale', RulerScale);
window.customElements.define('scroll-strip', ScrollStrip);
window.customElements.define('doc-page', DocPage);
window.customElements.define('doc-area', DocArea);
window.customElements.define('status-bar', StatusBar);
</script>
</body>
</html>
